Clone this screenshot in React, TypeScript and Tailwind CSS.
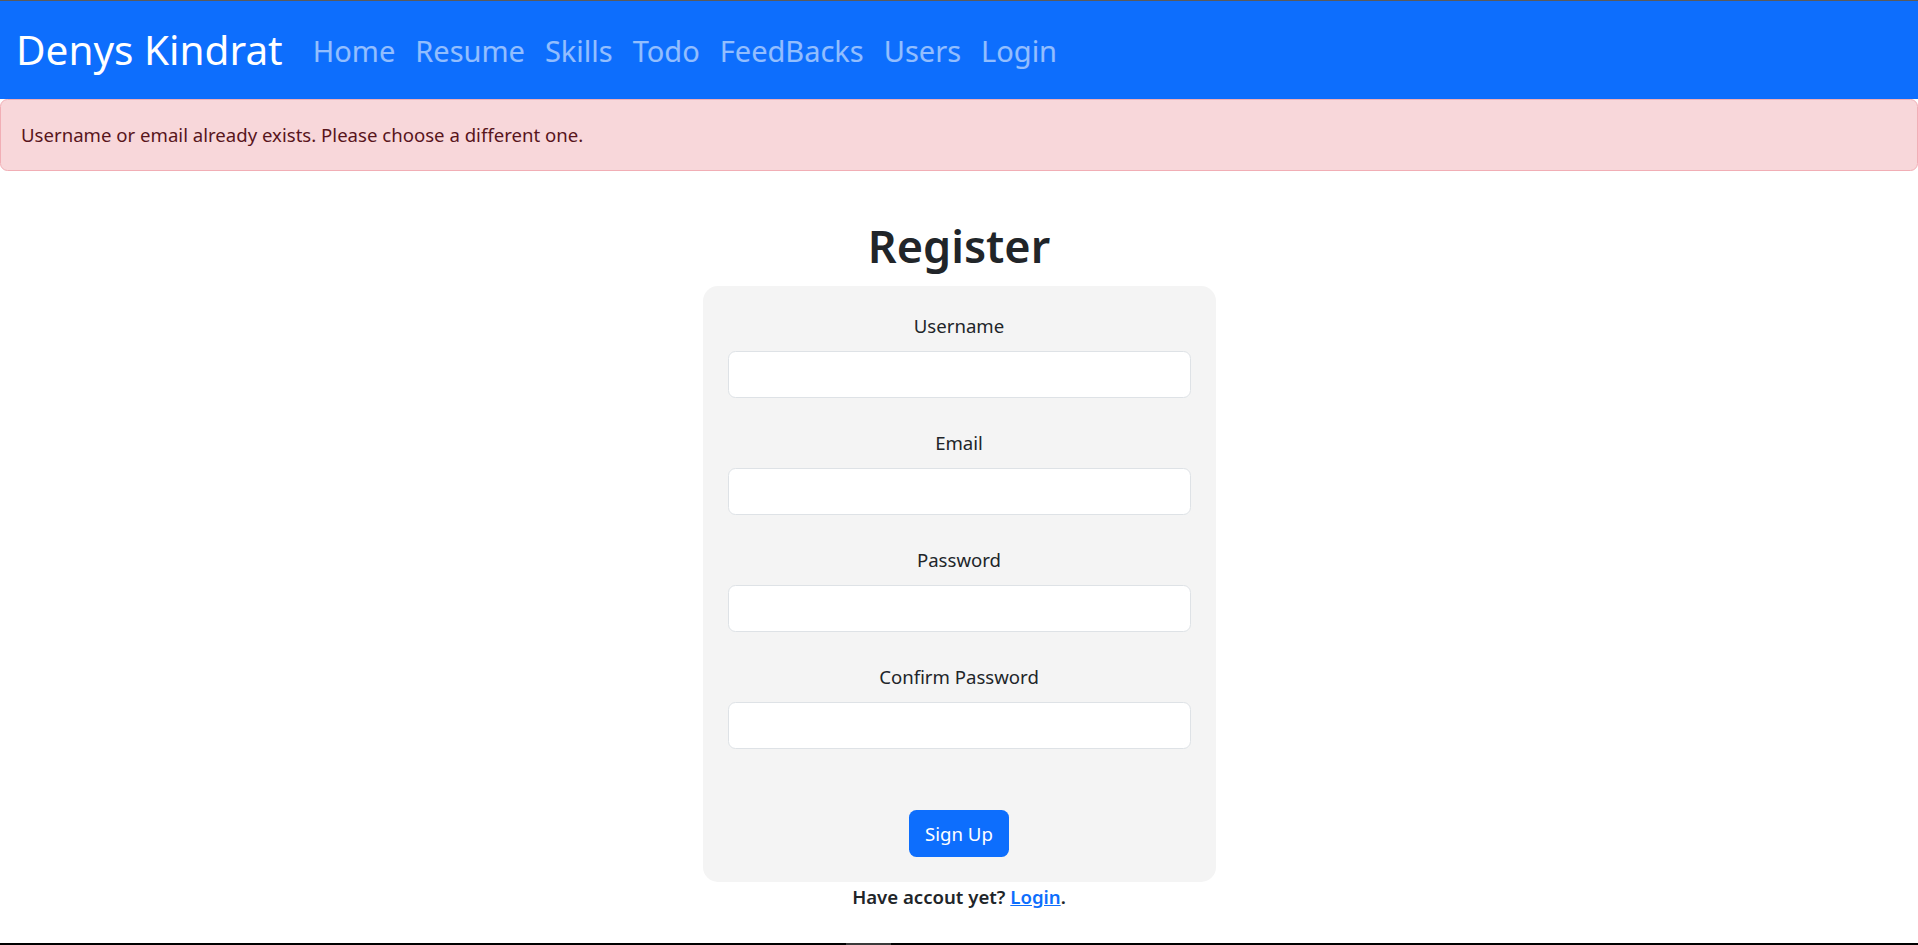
const navLinks = ['Home', 'Resume', 'Skills', 'Todo', 'FeedBacks', 'Users', 'Login'];

const fields = [
  { label: 'Username', type: 'text' },
  { label: 'Email', type: 'email' },
  { label: 'Password', type: 'password' },
  { label: 'Confirm Password', type: 'password' },
];

export default function App() {
  return (
    <div className="flex h-screen flex-col overflow-hidden bg-white font-['Noto_Sans','Open_Sans',sans-serif] text-[#212529]">
      <div className="h-px bg-[#5a5a5a]" />
      <nav className="flex h-[98px] items-center bg-[#0d6efd] pl-[16px]">
        <a href="#" className="mr-[20px] text-[40.5px] leading-none text-white">
          Denys Kindrat
        </a>
        <ul className="flex items-center">
          {navLinks.map((link) => (
            <li key={link}>
              <a href="#" className="block px-[10px] text-[29px] leading-none text-white/55">
                {link}
              </a>
            </li>
          ))}
        </ul>
      </nav>

      <div className="rounded-[7.5px] border border-[#f1aeb5] bg-[#f8d7da] p-[20px] text-[18.6px] leading-[30px] text-[#58151c]">
        Username or email already exists. Please choose a different one.
      </div>

      <main className="flex flex-1 flex-col items-center pt-[45px]">
        <h1 className="mb-[10px] text-[45px] font-semibold leading-[60px]">Register</h1>

        <form className="flex w-[513px] flex-col rounded-[15px] bg-[#f4f4f4] p-[25px]" onSubmit={(e) => e.preventDefault()}>
          {fields.map((field) => (
            <div key={field.label} className="mb-[30px]">
              <label className="mb-[10px] block text-center text-[18.6px] leading-[30px]">{field.label}</label>
              <input
                type={field.type}
                className="block h-[47px] w-full rounded-[7.5px] border border-[#dee2e6] bg-white px-[15px] text-[18.6px] outline-none"
              />
            </div>
          ))}
          <div className="mt-[31px] flex justify-center">
            <button
              type="submit"
              className="h-[47px] rounded-[7.5px] bg-[#0d6efd] px-[16px] text-[18.6px] leading-[30px] text-white"
            >
              Sign Up
            </button>
          </div>
        </form>

        <p className="text-[18.6px] font-semibold leading-[30px]">
          Have accout yet?{' '}
          <a href="#" className="text-[#0d6efd] underline">
            Login
          </a>
          .
        </p>
      </main>

      <div className="flex h-[2px] bg-black">
        <div className="ml-[846px] w-[45px] bg-[#3a3a3a]" />
      </div>
    </div>
  );
}
